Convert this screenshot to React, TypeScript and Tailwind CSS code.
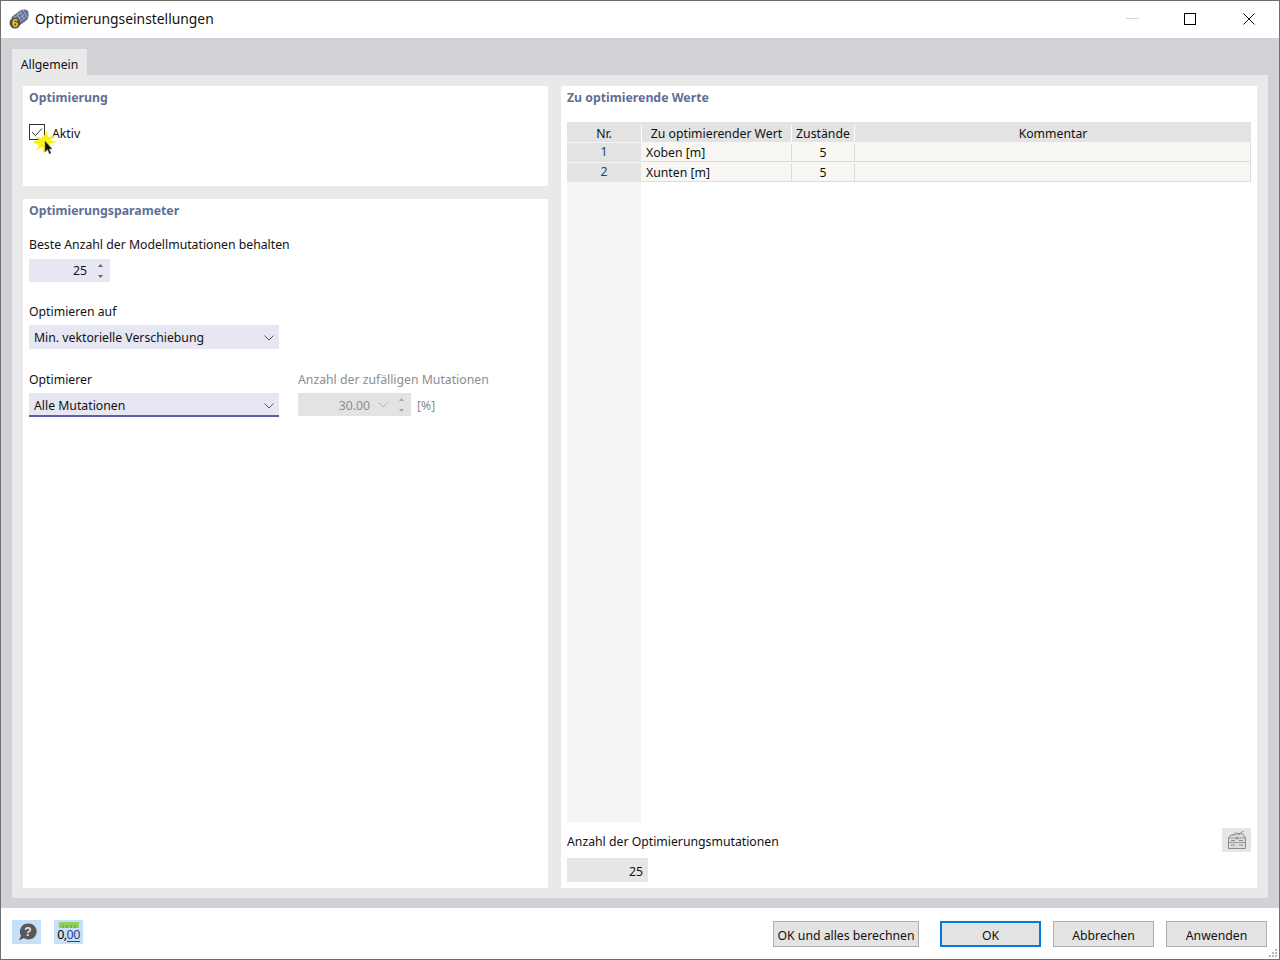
import { ReactNode } from "react";

const heading = "text-[12.3px] font-bold text-[#5f6f97] leading-[18px]";

function Chevron({ color = "#555" }: { color?: string }) {
  return (
    <svg width="10" height="6" viewBox="0 0 10 6" fill="none">
      <path d="M0.5 0.5 L5 5 L9.5 0.5" stroke={color} strokeWidth="1" />
    </svg>
  );
}

function Arrows({ color = "#666" }: { color?: string }) {
  return (
    <svg width="5" height="16" viewBox="0 0 5 16" fill={color}>
      <path d="M2.5 1 L5 4 L0 4 Z" />
      <path d="M0 12 L5 12 L2.5 15 Z" />
    </svg>
  );
}

function Select({ label, underline }: { label: string; underline?: boolean }) {
  return (
    <div
      className={`flex h-6 w-[250px] items-center justify-between bg-[#e6e7f2] pl-[5px] pr-[5px] ${
        underline ? "border-b-2 border-[#5a5ea5] pt-[4px]" : "pt-px"
      }`}
    >
      <span>{label}</span>
      <Chevron />
    </div>
  );
}

function Button({ children, width, primary }: { children: ReactNode; width: string; primary?: boolean }) {
  return (
    <div
      className={`flex h-[26px] items-center justify-center bg-[#e3e3e3] pt-[3px] whitespace-nowrap ${width} ${
        primary ? "border-2 border-[#0a78d7]" : "border border-[#adadad]"
      }`}
    >
      {children}
    </div>
  );
}

function AppIcon() {
  return (
    <svg width="20" height="20" viewBox="0 0 20 20">
      <path d="M2.5 8 L11 1.5 C14 0 17 0 19 2 C20 5 20 8 18 11 L11 16 L5 15 Z" fill="#5f6f8f" />
      <path
        d="M5 6.5 L8 13 M8 4 L11.5 12 M11 2 L15 10 M14 1 L18 8 M4 10 L12 3.5 M6 13 L15 5.5 M9 14.5 L18 7"
        stroke="#a9b8d3"
        strokeWidth="0.9"
      />
      <circle cx="6" cy="14" r="5.5" fill="#56523f" />
      <text x="6" y="18" fontSize="11" fontWeight="700" fill="#f2c93a" textAnchor="middle" fontFamily="Liberation Sans, sans-serif">
        6
      </text>
    </svg>
  );
}

function ClickMarker() {
  return (
    <svg className="absolute left-[29px] top-[126px]" width="28" height="30" viewBox="0 0 28 30">
      <path
        d="M14 9 L17 3 L18 10 L26 8 L20 13 L27 15 L20 17 L22 23 L17 19 L14 27 L12 20 L6 24 L9 18 L2 15 L9 13 L4 9 L11 11 Z"
        fill="#f8f21a"
      />
      <path d="M15 14 L15 25 L17.5 22.5 L19.5 27 L21 26 L19 22 L22 22 Z" fill="#111" stroke="#777" strokeWidth="0.5" />
    </svg>
  );
}

function ClipboardIcon() {
  return (
    <svg width="20" height="20" viewBox="0 0 20 20" fill="none">
      <path d="M1.5 8 L4 5 L15 3 L18.5 8 V18.5 H1.5 Z" fill="#dcdcdc" stroke="#8b8b8b" />
      <path d="M1.5 8 H18.5 M1.5 12.5 H18.5" stroke="#9a9a9a" />
      <path d="M4 10.5 H8 M12 10.5 H16 M4 15 H8 M12 15 H16" stroke="#8b8b8b" />
      <path d="M6 6 C8 2 11 2 12 5 C13 3 15 1.5 17 1" stroke="#9a9a9a" />
      <circle cx="10" cy="8" r="1.5" fill="#9a9a9a" />
    </svg>
  );
}

function HelpIcon() {
  return (
    <svg width="20" height="20" viewBox="0 0 20 20">
      <path d="M11 1.5 A8 8 0 1 1 7 16 L2 18.5 L4 13.5 A8 8 0 0 1 11 1.5 Z" fill="#58585a" />
      <text x="11" y="14" fontSize="12" fontWeight="700" fill="#dfe8f2" textAnchor="middle" fontFamily="Liberation Sans, sans-serif">
        ?
      </text>
    </svg>
  );
}

function UnitsButton() {
  return (
    <div className="flex h-6 w-[29px] flex-col items-center bg-[#c5e0f7] pt-[2px]">
      <svg width="20" height="6" viewBox="0 0 20 6" className="shrink-0">
        <rect width="20" height="6" fill="#8fce5e" />
        <path d="M4 3 V6 M8 3 V6 M12 3 V6 M16 3 V6" stroke="#5b9a35" />
      </svg>
      <span className="mt-px flex text-[12.5px] leading-[12px] tracking-[-0.6px] text-black">
        0,<span className="h-[13px] border-b border-[#2b3f8f] text-[#2b3f8f]">00</span>
      </span>
    </div>
  );
}

const rows = [
  { nr: 1, name: "Xoben [m]" },
  { nr: 2, name: "Xunten [m]" },
];

export default function App() {
  return (
    <div className="relative flex h-[960px] w-[1280px] flex-col border border-[#6f6f6f] bg-white font-['Noto_Sans',sans-serif] text-[12.25px] leading-[18px] text-[#111]">
      {/* title bar */}
      <div className="flex h-[37px] shrink-0 items-center pb-[2px] pl-[8px]">
        <AppIcon />
        <span className="ml-[6px] text-[13.85px]">Optimierungseinstellungen</span>
        <div className="ml-auto flex items-center pr-[24px]">
          <div className="h-px w-[13px] bg-[#d5d5d5]" />
          <div className="ml-[45px] h-3 w-3 border border-black" />
          <svg className="ml-[47px]" width="12" height="12" viewBox="0 0 12 12">
            <path d="M0.5 0.5 L11.5 11.5 M11.5 0.5 L0.5 11.5" stroke="#111" strokeWidth="1" />
          </svg>
        </div>
      </div>

      {/* main */}
      <div className="flex min-h-0 flex-1 flex-col bg-[#d1d1d6] px-[11px] pb-[10px] pt-[11px]">
        <div className="flex h-[26px] w-[75px] shrink-0 items-center justify-center bg-[#e9e9e9] pt-[6px]">Allgemein</div>
        <div className="flex min-h-0 flex-1 gap-[13px] bg-[#e9e9e9] px-[11px] pb-[10px] pt-[11px]">
          <div className="flex w-[525px] shrink-0 flex-col gap-[13px]">
            <section className="h-[100px] shrink-0 bg-white px-[6px] pt-[3px]">
              <h2 className={heading}>Optimierung</h2>
              <div className="mt-[17px] flex items-start gap-[7px]">
                <div className="flex h-4 w-4 items-center justify-center border border-[#333]">
                  <svg width="12" height="10" viewBox="0 0 12 10" fill="none">
                    <path d="M1 5 L4.5 8.5 L11 1.5" stroke="#333" strokeWidth="1" />
                  </svg>
                </div>
                <span className="pt-px">Aktiv</span>
              </div>
            </section>

            <section className="min-h-0 flex-1 bg-white px-[6px] pt-[3px]">
              <h2 className={heading}>Optimierungsparameter</h2>
              <div className="mt-[16px]">Beste Anzahl der Modellmutationen behalten</div>
              <div className="mt-[5px] flex h-[23px] w-[81px] items-center justify-end gap-[11px] bg-[#e6e7f2] pr-[7px]">
                <span>25</span>
                <Arrows />
              </div>

              <div className="mt-[21px]">Optimieren auf</div>
              <div className="mt-[4px]">
                <Select label="Min. vektorielle Verschiebung" />
              </div>

              <div className="mt-[22px] flex gap-[19px]">
                <div>
                  <div>Optimierer</div>
                  <div className="mt-[4px]">
                    <Select label="Alle Mutationen" underline />
                  </div>
                </div>
                <div className="text-[#8d8d8d]">
                  <div>Anzahl der zufälligen Mutationen</div>
                  <div className="mt-[4px] flex items-center gap-[6px]">
                    <div className="flex h-[23px] w-[113px] items-center justify-end bg-[#e3e3e3] pr-[7px]">
                      <span className="mr-[8px] pt-[2px]">30.00</span>
                      <span className="mr-[11px]">
                        <Chevron color="#b5b5b5" />
                      </span>
                      <Arrows color="#a5a5a5" />
                    </div>
                    <span className="pt-[2px]">[%]</span>
                  </div>
                </div>
              </div>
            </section>
          </div>

          <section className="flex min-w-0 flex-1 flex-col bg-white px-[6px] pt-[3px]">
            <h2 className={heading}>Zu optimierende Werte</h2>
            <div className="mt-[15px] flex min-h-0 flex-1">
              {/* Nr. column runs down the full height of the table */}
              <div className="flex w-[74px] shrink-0 flex-col bg-[#f5f5f5] text-center">
                <div className="h-5 bg-[#e3e3e3] pt-[3px]">Nr.</div>
                {rows.map((r) => (
                  <div key={r.nr} className="h-5 border-t border-[#f5f5f5] bg-[#e3e3e3] text-[#243f86]">
                    {r.nr}
                  </div>
                ))}
              </div>
              <div className="min-w-0 flex-1">
                <div className="flex h-5 bg-[#e3e3e3] pt-[3px] text-center">
                  <div className="w-[150px] shrink-0 border-l border-white">Zu optimierender Wert</div>
                  <div className="w-[63px] shrink-0 border-l border-white">Zustände</div>
                  <div className="flex-1 border-l border-white">Kommentar</div>
                </div>
                {rows.map((r) => (
                  <div key={r.nr} className="flex h-5 border-b border-r border-[#dcdcd8] bg-[#f8f7f3] pt-[2px]">
                    <div className="w-[151px] shrink-0 border-r border-[#dcdcd8] pl-[5px]">{r.name}</div>
                    <div className="w-[63px] shrink-0 border-r border-[#dcdcd8] text-center">5</div>
                    <div className="flex-1" />
                  </div>
                ))}
              </div>
            </div>

            <div className="flex h-[66px] shrink-0 items-start justify-between pt-[6px]">
              <div className="pt-[5px]">
                <div>Anzahl der Optimierungsmutationen</div>
                <div className="mt-[7px] flex h-6 w-[81px] items-center justify-end bg-[#e6e6e6] pr-[5px] pt-[3px]">25</div>
              </div>
              <div className="flex h-6 w-[29px] items-center justify-center bg-[#e6e6e6]">
                <ClipboardIcon />
              </div>
            </div>
          </section>
        </div>
      </div>

      {/* footer */}
      <div className="flex h-[51px] shrink-0 items-start pl-[11px] pr-[12px] pt-[12px]">
        <div className="flex h-6 w-[29px] items-center justify-center bg-[#c5e0f7]">
          <HelpIcon />
        </div>
        <div className="ml-[13px]">
          <UnitsButton />
        </div>
        <div className="ml-auto mt-[1px] flex">
          <Button width="w-[146px]">OK und alles berechnen</Button>
          <div className="ml-[21px]">
            <Button width="w-[101px]" primary>
              OK
            </Button>
          </div>
          <div className="ml-[12px]">
            <Button width="w-[101px]">Abbrechen</Button>
          </div>
          <div className="ml-[12px]">
            <Button width="w-[101px]">Anwenden</Button>
          </div>
        </div>
      </div>

      <ClickMarker />
      <svg className="absolute bottom-[1px] right-[1px]" width="10" height="10" viewBox="0 0 10 10" fill="#b8b8b8">
        <rect x="7" y="1" width="2" height="2" />
        <rect x="4" y="4" width="2" height="2" />
        <rect x="7" y="4" width="2" height="2" />
        <rect x="1" y="7" width="2" height="2" />
        <rect x="4" y="7" width="2" height="2" />
        <rect x="7" y="7" width="2" height="2" />
      </svg>
    </div>
  );
}
